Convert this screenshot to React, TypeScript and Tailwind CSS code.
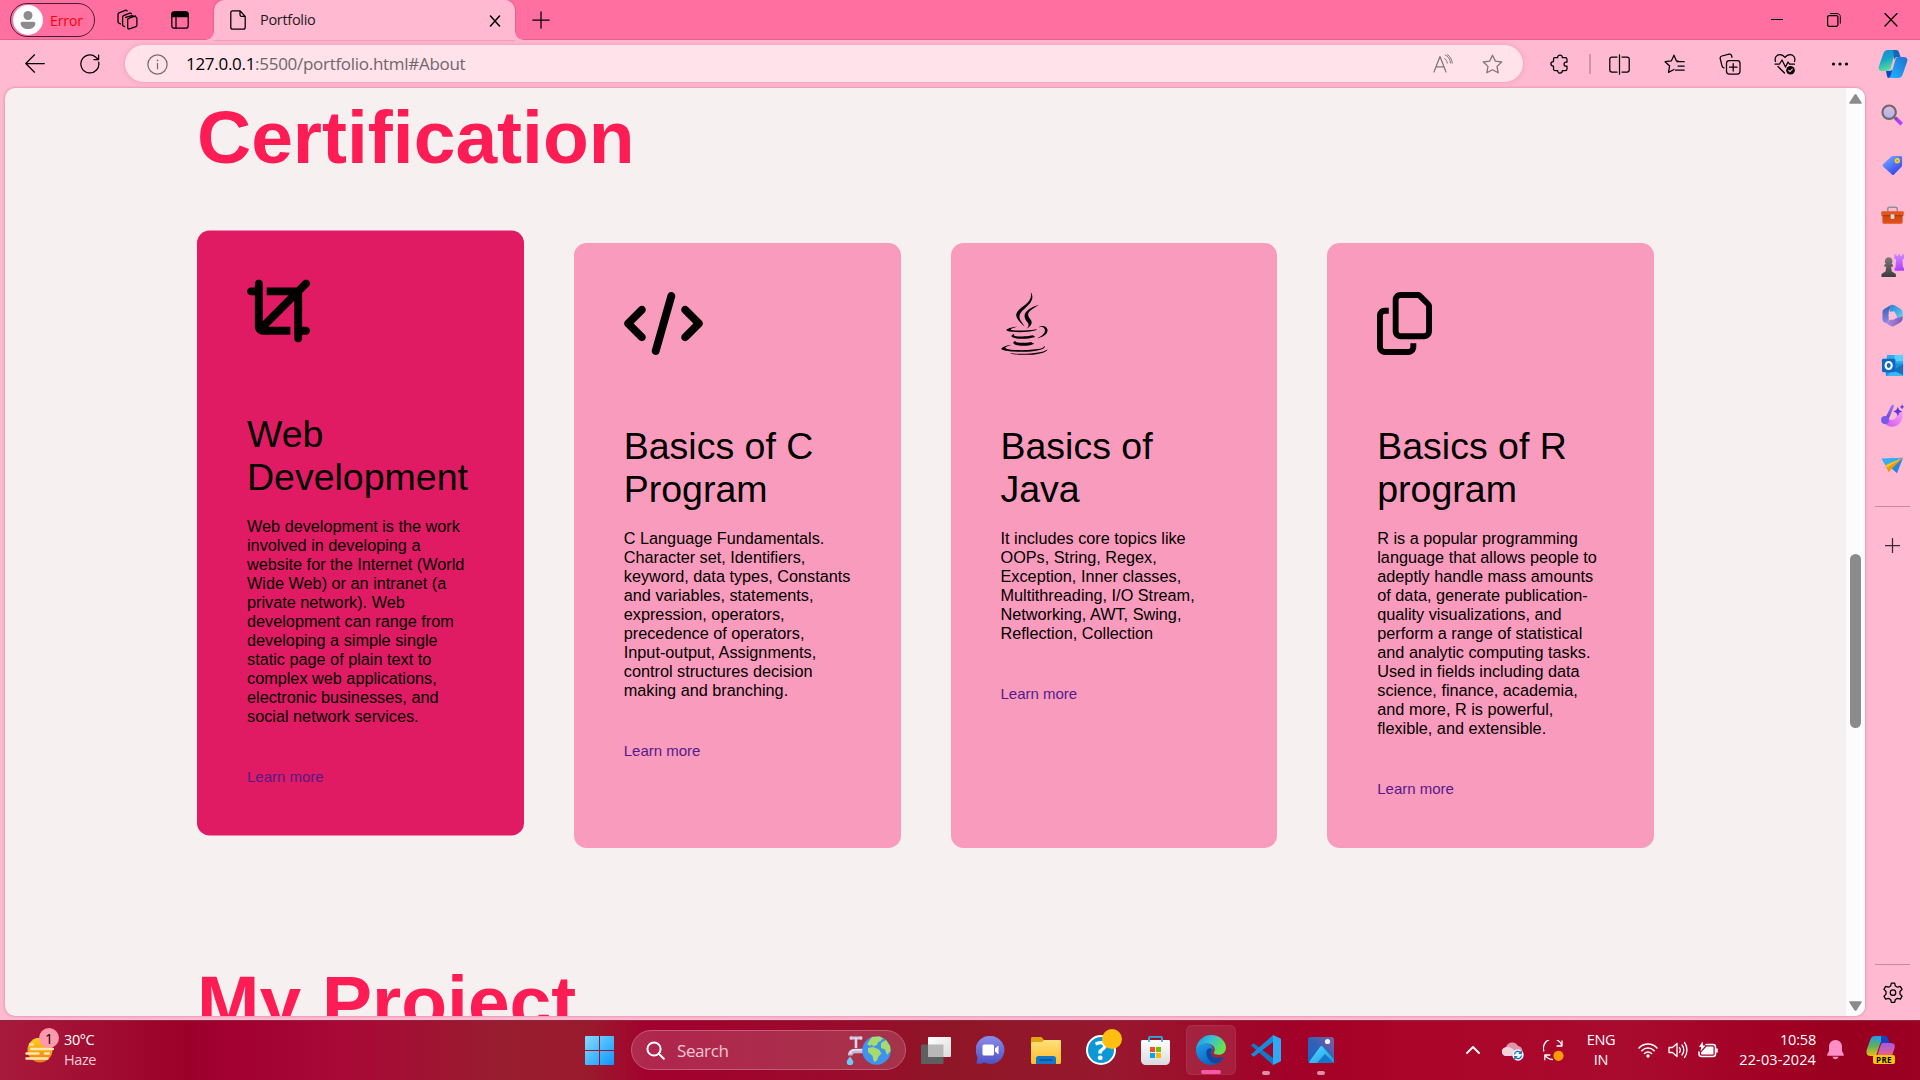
import React from "react";
import { FaCrop, FaCode, FaJava, FaRegCopy } from "react-icons/fa6";

type P = { className?: string; children?: React.ReactNode; vb?: string };

const Line = ({ className = "", children, vb = "0 0 20 20" }: P) => (
  <svg viewBox={vb} fill="none" stroke="currentColor" strokeWidth="1.25" strokeLinecap="round" strokeLinejoin="round" className={"shrink-0 block " + className}>
    {children}
  </svg>
);
const Art = ({ className = "", children, vb = "0 0 24 24" }: P) => (
  <svg viewBox={vb} className={"shrink-0 block " + className}>
    {children}
  </svg>
);

const STAR = "M10 1.2l2.7 5.6 6.1.8-4.5 4.2 1.1 6.1L10 15l-5.4 2.9 1.1-6.1L1.2 7.6l6.1-.8z";

function Gradients() {
  return (
    <svg className="absolute w-0 h-0">
      <defs>
        <linearGradient id="cpA" x1="0" y1="0" x2="0.3" y2="1">
          <stop offset="0" stopColor="#1488d8" /><stop offset=".5" stopColor="#12a5c8" /><stop offset="1" stopColor="#5fdc9a" />
        </linearGradient>
        <linearGradient id="cpB" x1="1" y1="0" x2="0" y2="1">
          <stop offset="0" stopColor="#1f6fd0" /><stop offset="1" stopColor="#1cb8ff" />
        </linearGradient>
        <linearGradient id="cpC" x1="0" y1="0" x2="0" y2="1">
          <stop offset="0" stopColor="#1f9df0" /><stop offset=".5" stopColor="#5fb05a" /><stop offset="1" stopColor="#e8c01c" />
        </linearGradient>
        <linearGradient id="cpD" x1="0" y1="0" x2="0" y2="1">
          <stop offset="0" stopColor="#a25ae8" /><stop offset="1" stopColor="#f0607c" />
        </linearGradient>
        <linearGradient id="tag" x1="0" y1="0" x2=".7" y2="1">
          <stop offset="0" stopColor="#7ab8ff" /><stop offset="1" stopColor="#3040f0" />
        </linearGradient>
        <linearGradient id="lens" x1="0" y1="0" x2="0" y2="1">
          <stop offset="0" stopColor="#e6b8dc" /><stop offset="1" stopColor="#a8b4ee" />
        </linearGradient>
        <linearGradient id="box" x1="0" y1="0" x2="0" y2="1">
          <stop offset="0" stopColor="#cf4210" /><stop offset="1" stopColor="#e0501a" />
        </linearGradient>
        <linearGradient id="rook" x1="0" y1="0" x2="0" y2="1">
          <stop offset="0" stopColor="#c98bff" /><stop offset="1" stopColor="#b23cff" />
        </linearGradient>
        <linearGradient id="pawn" x1="0" y1="0" x2="0" y2="1">
          <stop offset="0" stopColor="#7a7a7a" /><stop offset="1" stopColor="#3c3c3c" />
        </linearGradient>
        <linearGradient id="m1" x1="0" y1="1" x2="0" y2="0">
          <stop offset="0" stopColor="#8f86e0" /><stop offset="1" stopColor="#2b5fb4" />
        </linearGradient>
        <linearGradient id="m2" x1="0" y1="0" x2="1" y2="1">
          <stop offset="0" stopColor="#2f7fd8" /><stop offset="1" stopColor="#5ad4f4" />
        </linearGradient>
        <linearGradient id="m3" x1="0" y1="0" x2="1" y2="0">
          <stop offset="0" stopColor="#b593e6" /><stop offset="1" stopColor="#7b58b8" />
        </linearGradient>
        <linearGradient id="brush" x1="0" y1="0" x2="0" y2="1">
          <stop offset="0" stopColor="#9f7af4" /><stop offset="1" stopColor="#6a48d8" />
        </linearGradient>
        <linearGradient id="swirl" x1="0" y1="1" x2="1" y2="0">
          <stop offset="0" stopColor="#d84cf8" /><stop offset="1" stopColor="#f0a4f4" />
        </linearGradient>
        <linearGradient id="win" x1="0" y1="0" x2="1" y2="1">
          <stop offset="0" stopColor="#86dcff" /><stop offset="1" stopColor="#0b96ff" />
        </linearGradient>
        <linearGradient id="sun" x1="0" y1="0" x2="0" y2="1">
          <stop offset="0" stopColor="#ffd21a" /><stop offset="1" stopColor="#ee7a10" />
        </linearGradient>
        <linearGradient id="chat" x1="0" y1="0" x2="0" y2="1">
          <stop offset="0" stopColor="#8b8be8" /><stop offset="1" stopColor="#4f52c4" />
        </linearGradient>
        <linearGradient id="fold" x1="0" y1="0" x2="0" y2="1">
          <stop offset="0" stopColor="#ffe07a" /><stop offset="1" stopColor="#fcbc2c" />
        </linearGradient>
        <linearGradient id="bag" x1="0" y1="0" x2="0" y2="1">
          <stop offset="0" stopColor="#ffffff" /><stop offset="1" stopColor="#d8dade" />
        </linearGradient>
        <linearGradient id="edgeTop" x1="0" y1="0" x2="1" y2=".4">
          <stop offset="0" stopColor="#1a8fe0" /><stop offset=".5" stopColor="#35c1d8" /><stop offset="1" stopColor="#66e24a" />
        </linearGradient>
        <linearGradient id="edgeBody" x1="0" y1="0" x2=".6" y2="1">
          <stop offset="0" stopColor="#1fa0ea" /><stop offset="1" stopColor="#0b5fc0" />
        </linearGradient>
        <linearGradient id="photo" x1="0" y1="1" x2="1" y2="0">
          <stop offset="0" stopColor="#1c62c4" /><stop offset=".5" stopColor="#2f62b8" /><stop offset="1" stopColor="#8a5a9c" />
        </linearGradient>
        <linearGradient id="hill" x1="0" y1="0" x2="1" y2="1">
          <stop offset="0" stopColor="#58dcff" /><stop offset="1" stopColor="#189ae8" />
        </linearGradient>
        <linearGradient id="view" x1="0" y1="0" x2="1" y2="1">
          <stop offset="0" stopColor="#ffffff" /><stop offset="1" stopColor="#dcdcdc" />
        </linearGradient>
      </defs>
    </svg>
  );
}

function TabStrip() {
  return (
    <div className="relative flex h-10 shrink-0 items-center bg-[#ff6fa0] pl-2.5 shadow-[inset_0_-1px_0_#e2628f]">
      <div className="flex h-[34px] w-[85px] items-center rounded-full border border-[#4a2030] pl-[2px]">
        <div className="flex size-[30px] shrink-0 items-center justify-center rounded-full bg-white">
          <Art className="h-[18px] w-[16px]" vb="0 0 16 18">
            <circle cx="8" cy="4.5" r="4.500" fill="#8c8c8c" />
            <path d="M2.500 10.800H13.500C14.600 10.800 15.300 11.500 15.300 12.500C15.300 16 12 18 8 18S0.700 16 0.700 12.500C0.700 11.500 1.400 10.800 2.500 10.800Z" fill="#8c8c8c" />
          </Art>
        </div>
        <span className="ml-[7px] text-[14px] tracking-[-0.1px] text-[#ff0000]">Error</span>
      </div>
      <Line className="ml-[21px] size-[22px] text-black" vb="0 0 22 22">
        <path d="M9.500 8.300l6.500-1.600 4 1.300c.6.200.9.600.9 1.200v7c0 .7-.4 1.200-1 1.400l-6.400 2.300c-1 .3-1.800-.2-1.800-1.200v-8c0-.7.4-1.200 1-1.400l6.700-2.400" />
        <path d="M8.600 17.600l-1-.400c-.7-.3-1-.8-1-1.500V8.200c0-.8.4-1.300 1-1.500l6.200-2.500c.6-.2 1.200 0 1.700.5" />
        <path d="M4.500 14.900l-1.500-.7c-.7-.3-1-.8-1-1.500V5.400c0-.8.400-1.300 1-1.500L9.300 1.300c.7-.2 1.400 0 1.800.6" />
      </Line>
      <Line className="ml-[33px] size-[18px] text-black" vb="0 0 18 18">
        <rect x=".8" y=".8" width="16.400" height="16.400" rx="2.500" />
        <path d="M1 5.500h16V3c0-1.200-.8-2-2-2H3c-1.200 0-2 .8-2 2z" fill="currentColor" />
        <path d="M5 5.500v11.500" />
      </Line>
      <div className="relative ml-[25px] flex h-10 w-[301px] items-center rounded-t-[10px] bg-[#ffb9d0] pl-[16px] shadow-[0_0_2px_rgba(120,20,60,.5)]">
        <span className="absolute bottom-0 -left-2 size-2 bg-[radial-gradient(circle_at_0_0,#ff6fa0_7.500px,#ffb9d0_8px)]" />
        <span className="absolute bottom-0 -right-2 size-2 bg-[radial-gradient(circle_at_100%_0,#ff6fa0_7.500px,#ffb9d0_8px)]" />
        <Line className="h-[20px] w-[16px] text-black" vb="0 0 16 20">
          <path d="M2.500.8H10l5.200 5.600v10.800c0 1.200-.8 2-2 2H2.800c-1.200 0-2-.8-2-2V2.800c0-1.200.8-2 1.700-2zM10 .8v4c0 1 .6 1.600 1.600 1.600h3.600" />
        </Line>
        <span className="mb-px ml-[14px] text-[14.500px] tracking-[-0.3px] text-[#1b1b1b]">Portfolio</span>
        <Line className="mt-px ml-auto mr-[14px] size-[12px] text-black" vb="0 0 12 12"><path d="M1.500 1l9 10M10.500 1l-9 10" strokeWidth="1.500" /></Line>
      </div>
      <Line className="ml-[17px] size-[18px] text-black" vb="0 0 18 18"><path d="M9 .8v16.400M.8 9h16.400" /></Line>
      <div className="ml-auto flex items-center text-black">
        <Line className="size-[14px]" vb="0 0 14 14"><path d="M1 6.500h12" strokeLinecap="butt" strokeWidth="1" /></Line>
        <Line className="ml-[43px] size-[14px]" vb="0 0 14 14">
          <rect x=".6" y="2.500" width="10.300" height="10.800" rx="1.500" />
          <path d="M3.500.6h6.500c2 0 3.300 1.200 3.300 3.200v6.500" strokeWidth="1" />
        </Line>
        <Line className="ml-[43px] mr-[22px] size-[14px]" vb="0 0 14 14"><path d="M1 .5l12 12.500M13 .5L1 13" /></Line>
      </div>
    </div>
  );
}

function Toolbar() {
  return (
    <div className="flex h-12 shrink-0 items-center pl-[25px] text-black">
      <Line className="size-[20px]" vb="0 0 20 20"><path d="M19.300 9.500H.8M9.500.8L.8 9.500l8.700 8.700" /></Line>
      <Line className="ml-[35px] size-[20px]" vb="0 0 20 20">
        <path d="M18.700 8.200A9 9 0 1 1 15.800 3.200L18.500 5.400M18.600 1v4.600h-4.800" />
      </Line>
      <div className="mb-px ml-[25px] flex h-[37px] w-[1398px] items-center rounded-full bg-[#ffe2ea] pl-[22px] pt-px shadow-[0_0_5px_rgba(200,80,130,.3)]">
        <Line className="size-[21px] text-[#7d6a70]" vb="0 0 21 21">
          <circle cx="10.500" cy="10.500" r="9.600" /><path d="M10.500 9.500v5.300" /><path d="M10.500 6.300v.2" strokeWidth="1.700" />
        </Line>
        <span className="ml-[18px] text-[17px] tracking-[-0.290px] text-[#6f666a]"><span className="text-black">127.0.0.1</span>:5500/portfolio.html#About</span>
        <Line className="ml-auto h-[20px] w-[20px] text-[#85747a]" vb="0 0 20 20">
          <path d="M1 18L7 2.500l6 15.500M3 12.900h8" /><path d="M11.500 4.400c1.500 1 2.500 2.700 2.800 4.700M12.300 1c3 1.200 5 4.500 5.200 8M14.500.6c2.700 1.600 4.500 5 4.800 8.600" strokeWidth="1" />
        </Line>
        <Line className="ml-[29px] mr-[20px] h-[21px] w-[21px] text-[#85747a]"><path d={STAR} /></Line>
      </div>
      <Line className="ml-[27px] size-[20px]">
        <path d="M4.500 3.700H7.700c-.3-3.600 4.900-3.600 4.600 0h3c1 0 1.700.7 1.700 1.700v2.800h-1c-2.600 0-2.600 4 0 4h1v2.700c0 1-.7 1.700-1.700 1.700h-3c0 3.500-4.600 3.500-4.600 0H5.200c-1 0-1.700-.7-1.700-1.700v-2.800c-3.500 0-3.500-4.500 0-4.500V5.400c0-1 .4-1.700 1-1.700z" />
      </Line>
      <div className="ml-[19px] h-5 w-[2px] bg-[#d593a9]" />
      <Line className="ml-[18px] size-[21px]" vb="0 0 21 21">
        <path d="M10.500.8v19.400M8 3H3C1.700 3 .8 3.800.8 5v11c0 1.200.9 2 2.200 2h5M13 3h5c1.300 0 2.200.8 2.200 2v11c0 1.200-.9 2-2.200 2h-5" />
      </Line>
      <Line className="ml-[34px] size-[21px]" vb="0 0 21 21">
        <path d="M14 7L12.300 6.700 10 1.200 7.300 6.900l-6.200.8 4.500 4.300-1.100 6.400L10 15.500M13 7.700h7.200M14 12h6.200M11.500 16.200h8.700" />
      </Line>
      <Line className="ml-[34px] size-[22px]" vb="0 0 22 22">
        <rect x="7.500" y="7.500" width="13.500" height="13.500" rx="2.800" /><path d="M14.200 10.500v7.500M10.500 14.200h7.500" />
        <path d="M5 14.800C3.600 14.600 3.300 14 3 12.800L1.200 5.600C.9 4.200 1.400 3.400 2.800 3L10 1.100c1.300-.3 2.200.1 2.600 1.500l.4 1.700" />
      </Line>
      <Line className="ml-[33px] size-[22px]" vb="0 0 22 22">
        <path d="M1.500 8.500C.2 4.500 2.800 1.500 5.800 1.500c2.400 0 4 1.300 5.200 3 1.200-1.700 2.800-3 5.200-3 3 0 5.600 3 4.300 7M1 11h4.500l2.500-4 3.500 7 2.500-5 1.500 2h5M4 13.500l6.500 6.500" />
        <circle cx="16.500" cy="17.300" r="4.300" fill="currentColor" stroke="none" /><path d="M14.700 17.400l1.300 1.200 2.300-2.500" stroke="#ffb9d0" />
      </Line>
      <Art className="ml-[35px] h-[6px] w-[18px]" vb="0 0 18 6"><circle cx="2.500" cy="3" r="1.600" /><circle cx="9" cy="3" r="1.600" /><circle cx="15.500" cy="3" r="1.600" /></Art>
    </div>
  );
}

const cards = [
  {
    Icon: FaCrop, size: "h-[63px] w-[63px]", title: "Web\nDevelopment", active: true,
    text: "Web development is the work\ninvolved in developing a\nwebsite for the Internet (World\nWide Web) or an intranet (a\nprivate network). Web\ndevelopment can range from\ndeveloping a simple single\nstatic page of plain text to\ncomplex web applications,\nelectronic businesses, and\nsocial network services.",
  },
  {
    Icon: FaCode, size: "h-[63px] w-[79px]", title: "Basics of C\nProgram", active: false,
    text: "C Language Fundamentals.\nCharacter set, Identifiers,\nkeyword, data types, Constants\nand variables, statements,\nexpression, operators,\nprecedence of operators,\nInput-output, Assignments,\ncontrol structures decision\nmaking and branching.",
  },
  {
    Icon: FaJava, size: "h-[63px] w-[47px]", title: "Basics of\nJava", active: false,
    text: "It includes core topics like\nOOPs, String, Regex,\nException, Inner classes,\nMultithreading, I/O Stream,\nNetworking, AWT, Swing,\nReflection, Collection",
  },
  {
    Icon: FaRegCopy, size: "h-[63px] w-[55px]", title: "Basics of R\nprogram", active: false,
    text: "R is a popular programming\nlanguage that allows people to\nadeptly handle mass amounts\nof data, generate publication-\nquality visualizations, and\nperform a range of statistical\nand analytic computing tasks.\nUsed in fields including data\nscience, finance, academia,\nand more, R is powerful,\nflexible, and extensible.",
  },
];

function Page() {
  return (
    <div className="ml-[5px] flex h-[928px] w-[1860px] shrink-0 overflow-hidden rounded-[10px] bg-[#f6f0f0] shadow-[0_0_3px_rgba(150,40,90,.45)]">
      <main className="h-full w-[1841px] overflow-hidden pl-[192px] pt-[6px] font-['Liberation_Sans',Arial,sans-serif] text-black">
        <h1 className="h-[86px] text-[75px] leading-[86px] font-bold text-[#fd1c54] [font-variant-ligatures:none]">Certification</h1>
        <div className="mt-[63px] grid w-[1457px] grid-cols-4 gap-[50px]">
          {cards.map((c) => (
            <article key={c.title} className={"h-[605px] rounded-[12.500px] p-[50px] pt-[49px] " + (c.active ? "-translate-y-[12.500px] bg-[#e11b63]" : "bg-[#f99bbc]")}>
              <c.Icon className={"block " + c.size} />
              <h2 className="mt-[70px] whitespace-pre text-[37.500px] leading-[43px]">{c.title}</h2>
              <p className="mt-[18px] whitespace-pre text-[16.250px] leading-[19px]">{c.text}</p>
              <a className="mt-[42px] block text-[15px] leading-[17px] text-[#551a8b]">Learn more</a>
            </article>
          ))}
        </div>
        <h1 className="mt-[111px] h-[86px] text-[75px] leading-[86px] font-bold text-[#fd1c54]">My Project</h1>
      </main>
      <div className="flex w-[19px] flex-col items-center bg-[#fcfcfc] text-[#8b8b8b]">
        <Art className="mt-[6px] h-[10px] w-[13px]" vb="0 0 13 10"><path d="M5.600.6c.5-.6 1.300-.6 1.800 0l5.200 7.800c.4.700 0 1.400-.8 1.400H1.200c-.8 0-1.200-.7-.8-1.400z" fill="#8b8b8b" /></Art>
        <div className="mt-[450px] h-[174px] w-[11px] rounded-full bg-[#8b8b8b]" />
        <Art className="mt-auto mb-[5px] h-[10px] w-[13px]" vb="0 0 13 10"><path d="M5.600 9.400c.5.600 1.300.6 1.800 0l5.200-7.800c.4-.7 0-1.400-.8-1.400H1.200C.4.200 0 .9.400 1.600z" fill="#8b8b8b" /></Art>
      </div>
    </div>
  );
}

const sideIcons = [
  <>
    <path d="M15 14.500l6.500 6.500" stroke="#b43cff" strokeWidth="3.800" strokeLinecap="butt" /><path d="M13.500 13.500l3 3" stroke="#6c5c74" strokeWidth="2" />
    <circle cx="8.500" cy="8.500" r="7" fill="url(#lens)" stroke="#6a6a6a" strokeWidth="2.200" />
  </>,
  <>
    <path d="M12.500 2h8c1 0 1.500.6 1.500 1.500v8.200c0 .8-.3 1.300-.8 1.800l-7.600 8c-.7.700-1.500.7-2.200 0L2.200 13c-.7-.7-.7-1.500 0-2.200l8.300-8c.6-.6 1.200-.8 2-.8z" fill="url(#tag)" />
    <circle cx="17" cy="7" r="1.900" fill="#8c90a0" stroke="#ffd21c" strokeWidth="1.700" />
  </>,
  <>
    <path d="M7 8V5.500C7 4 8 3.500 9 3.500h6c1 0 2 .5 2 2V8" fill="none" stroke="#909090" strokeWidth="1.600" />
    <rect x="1.500" y="11" width="21" height="9.500" rx="1.200" fill="url(#box)" /><rect x=".3" y="7.500" width="23.400" height="5" rx="1" fill="#e0561c" /><path d="M1.500 12.200h21" stroke="#a83408" />
    <rect x="10" y="10.700" width="4" height="5" rx="1.300" fill="#d6d6d6" />
  </>,
  <>
    <path d="M14 .3h2.200v1.800h1.700V.3h2.200v1.800h1.700V.3H24v4.500l-1.600 1.200.5 7.500 1.100 1.200v2.800h-9.800v-2.800l1-1.200.5-7.500L14 4.800z" fill="url(#rook)" />
    <path d="M8 3.500a4 4 0 0 1 3 6.600l1.500 1.200v2h-2l.8 5 4.200 2.500V24H.5v-3.200l4.200-2.500.8-5h-2v-2L5 10.100a4 4 0 0 1 3-6.600z" fill="url(#pawn)" />
  </>,
  <>
    <path d="M10.500 1L3.800 4.900C2.300 5.800 1.500 7 1.500 8.700v7c0 1.700.8 2.900 2.300 3.700 2.200 1 4.200-.4 4.200-2.400V8z" fill="url(#m1)" />
    <path d="M9.800 1.400c1.500-.9 2.900-.9 4.400 0l6 3.600c1.500.9 2.300 2 2.300 3.700v4.300c-.2 2-3.500 2.500-5.500 1.200L14 9 9 8z" fill="url(#m2)" />
    <path d="M22.500 12v3.500c0 1.600-.8 2.800-2.300 3.700l-6 3.500c-1.500.9-2.900.9-4.400 0l-6-3.500c2 .8 4.200-.5 4.200-2.200L13 16l5-2c2 .5 4-.5 4.500-2z" fill="url(#m3)" />
    <path d="M10 7.800h4L16.300 12 14 16.200h-4L7.700 12z" fill="#ffc0d6" />
  </>,
  <>
    <rect x="6" y="1" width="17" height="12" rx="1" fill="#2eaaf0" /><path d="M14 1h9v6.500h-9z" fill="#56d0ff" />
    <path d="M5 10h18v12c0 .6-.4 1-1 1H6c-.6 0-1-.4-1-1z" fill="#1a8fe0" /><path d="M23 11L12 17l11 5.500z" fill="#1470c0" /><path d="M12 17l11 5c0 .6-.4 1-1 1H6z" fill="#36b8f4" />
    <rect x="1" y="5" width="14" height="14" rx="1.500" fill="#0c68c4" /><ellipse cx="8" cy="12" rx="3.200" ry="3.600" fill="none" stroke="#fff" strokeWidth="2.200" />
  </>,
  <>
    <path d="M7.500 15c2 2.500 6.500 2 8.500-1.500 1.200-2 1-3.500 1.500-5.500L22 8.500c1.500 5-.2 10.500-4.500 13.500-5 3.300-12 2-15-4z" fill="url(#swirl)" />
    <path d="M12.500.8c1 .4 1.200 1.100.9 2L8.300 15 5 13.500 10.800 1.600c.4-.7 1-.9 1.700-.8z" fill="url(#brush)" /><circle cx="4.300" cy="16.800" r="4.200" fill="#7858e8" />
    <path d="M17.500 3l1.500 3.200L22.200 7.700 19 9.200l-1.500 3.200L16 9.200l-3.200-1.500L16 6.200z" fill="#5c34e4" /><path d="M22 .3l.8 1.900 1.700.8-1.700.8-.8 1.900-.8-1.900-1.700-.8 1.700-.8z" fill="#7038e8" />
  </>,
  <>
    <path d="M.5 5l22.500-1L11 13z" fill="#38b0f0" /><path d="M23 4l-6.300 16-6.700-6z" fill="#2486e4" />
    <path d="M23 4L5 12.500 8 19l3.500-4z" fill="#e89a10" /><path d="M.5 5L5 12.500 23 4z" fill="#34aef0" /><path d="M23 4L5 11.500l.5 3z" fill="#ffc21c" />
  </>,
];

function Sidebar() {
  return (
    <aside className="flex w-[55px] flex-col items-center">
      <div className="flex h-[50px] items-center">
        <Art className="mb-[2px] h-[28px] w-[30px]" vb="0 0 30 28">
          <path d="M17 0h-7C7 0 5.800 1.800 5 4.500L1 16c-1.200 3.800.5 5 3.500 5H9c2.500 0 3.300-1.500 4-4l2.700-9.500C16.400 5 17.500 4 20 4c-.5-2.500-1-4-3-4z" fill="url(#cpA)" />
          <path d="M13 28h7c3 0 4.200-1.800 5-4.500L29 12c1.200-3.800-.5-5-3.500-5H21c-2.500 0-3.300 1.500-4 4l-2.700 9.500C13.600 23 12.500 24 10 24c.5 2.500 1 4 3 4z" fill="url(#cpB)" />
          <path d="M15 0h3c2 0 2.700 1 3.300 3l1.200 4H20c-2.500 0-3 1-3.700 3z" fill="#1565b8" /><path d="M8 21h3.500c1.800 0 2.500-.8 3.200-3L13 24.500c-.8 2.500-1.500 3.500-3 3.500C9 27 8.500 24 8 21z" fill="#1246c0" />
        </Art>
      </div>
      {sideIcons.map((icon, i) => (
        <div key={i} className="flex h-[50px] items-center"><Art className="size-[23px]">{icon}</Art></div>
      ))}
      <div className="mt-4 h-px w-[35px] shrink-0 bg-[#c48a9d]" />
      <Line className="mt-[31px] size-[15px] text-[#3a2a30]" vb="0 0 15 15"><path d="M7.500.5v14M.5 7.500h14" /></Line>
      <div className="mt-auto h-px w-[35px] shrink-0 bg-[#c48a9d]" />
      <Line className="mt-[17px] mb-[16px] size-[22px] text-black" vb="0 0 24 24">
        <g strokeWidth="1.400">
          <path d="M10.200 1.200h3.600l.8 3.200 2.300 1.300 3.100-.9 1.900 3.200-2.300 2.300v2.900l2.300 2.300-1.900 3.200-3.100-.9-2.300 1.300-.8 3.200h-3.600l-.8-3.200-2.300-1.300-3.100.9-1.900-3.200 2.300-2.300v-2.900L2.100 8 4 4.800l3.100.9 2.300-1.300z" /><circle cx="12" cy="11.700" r="3" />
        </g>
      </Line>
    </aside>
  );
}

function Taskbar() {
  return (
    <footer className="relative flex h-[60px] shrink-0 items-center bg-[linear-gradient(90deg,#a81a3c_0px,#9b0029_190px,#a10031_225px,#a80936_350px,#981d2e_500px,#9a1a2d_590px,#a3002e_650px,#9a0c2c_850px,#8e1626_950px,#98182e_1110px,#a20028_1300px,#ab0528_1400px,#a80a2e_1640px,#a10024_1780px,#98001f_1850px,#9c0024_1920px)] text-white shadow-[inset_0_1px_0_#8a2740]">
      <div className="relative ml-[25px] h-[40px] w-[39px]">
        <Art className="absolute top-[8px] left-0 h-[25px] w-[29px]" vb="0 0 29 25">
          <circle cx="15" cy="12" r="12.500" fill="url(#sun)" />
          <path d="M5 6.500h3M6 11h22M1.500 15.500h12M20 15.500h4M1.500 20.500h21" stroke="#ffe9b0" strokeWidth="2.400" strokeLinecap="round" />
        </Art>
        <span className="absolute -top-[2px] left-[14px] flex size-5 items-center justify-center rounded-full bg-[#ff98ac] text-[14px] text-black">1</span>
      </div>
      <div className="w-[200px] text-[14.500px] leading-5 tracking-[-0.4px]"><div>30°C</div><div className="text-[#f0cdd5]">Haze</div></div>
      <Art className="ml-[321px] size-[29px]" vb="0 0 29 29">
        <path d="M1 0h13v14H0V1a1 1 0 0 1 1-1zM15 0h13a1 1 0 0 1 1 1v13H15zM0 15h14v14H1a1 1 0 0 1-1-1zM15 15h14v13a1 1 0 0 1-1 1H15z" fill="url(#win)" />
      </Art>
      <div className="ml-[17px] flex h-10 w-[275px] items-center rounded-full border border-[#c25a78] bg-[#ffffff26] pl-[14px]">
        <Line className="size-[19px]" vb="0 0 19 19"><g strokeWidth="2"><circle cx="8" cy="8" r="6.600" /><path d="M12.800 12.800l5 5" /></g></Line>
        <span className="mt-px ml-[12px] text-[17px] tracking-[-0.4px] text-[#efc7d2]">Search</span>
        <Art className="ml-auto h-[30px] w-[18px]" vb="0 0 18 30">
          <path d="M5.500 3h9" stroke="#cfc4dc" strokeWidth="3" strokeLinecap="round" /><path d="M5 1.500v3M15 1.500v3M10 2v11" stroke="#ded6e8" strokeWidth="2.600" /><path d="M18 16H9c-3.500 0-4.800 1.500-4.800 4.500" stroke="#c4b8d4" strokeWidth="4.600" fill="none" /><path d="M18 14.800H9c-3 0-4.500 1-5 4" stroke="#ece6f2" strokeWidth="1.400" fill="none" />
          <path d="M4 21.500c2 2.500 3.300 4 3.300 5.500a3.300 3.300 0 0 1-6.600 0c0-1.500 1.300-3 3.300-5.500z" fill="#6cc8f4" />
        </Art>
        <Art className="mr-[14px] -ml-[2px] size-[29px]" vb="0 0 29 29">
          <circle cx="14.500" cy="14.500" r="14.300" fill="#3f92ee" />
          <path d="M10 1l8-.6 3 2-3 3-2 .5-1 3-4 1.500-1-2-2 1.500L5 8zM6 12l5-1 6 2.500 2.500 4-3 3-1.500 4-3 1.500-1.500-6L6 16zM19 7l5-3 4 6 .6 5-3.600 4-2-5.500-4-1.500z" fill="#a5dc6c" />
        </Art>
      </div>
      <Art className="ml-[15px] h-[27px] w-[30px]" vb="0 0 30 27">
        <rect x="0" y="7.500" width="22.500" height="19.500" rx="1" fill="#5f5f5f" /><rect x="7" y="0" width="23" height="20" rx="1" fill="url(#view)" /><path d="M7 7.500h15.500V20H7z" fill="#b8b8b8" />
      </Art>
      <Art className="ml-[25px] size-[29px]" vb="0 0 29 29">
        <path d="M14.500 0a14 14 0 1 1-6.400 26.500C6 27.800 3 28.200.5 27.500l1-6.500A14 14 0 0 1 14.500 0z" fill="url(#chat)" />
        <rect x="6.500" y="8.500" width="11.500" height="11" rx="1.500" fill="#fff" /><path d="M19 12.500l3.500-3v9l-3.500-3z" fill="#fff" />
      </Art>
      <Art className="ml-[26px] h-[27px] w-[30px]" vb="0 0 30 27">
        <path d="M0 1.500C0 .6.600 0 1.500 0h9l2.500 3h15.500c.9 0 1.500.6 1.500 1.500V9H0z" fill="#e0a410" /><path d="M0 6.500C0 5.600.5 5 1.500 5H11l2-2h15.500c.9 0 1.500.6 1.500 1.500v21c0 .9-.6 1.500-1.500 1.500h-27C.6 27 0 26.400 0 25.500z" fill="url(#fold)" />
        <path d="M5 27v-5.500C5 20 6 19 7.500 19h15c1.500 0 2.500 1 2.500 2.500V27z" fill="#1478c8" /><path d="M8.500 23h13" stroke="#0a4c8c" strokeWidth="1.300" />
      </Art>
      <div className="relative ml-[25px] flex size-[30px] items-center justify-center rounded-full border-2 border-white bg-[#0c98d4] text-[26px] leading-none font-bold">
        ?
        <span className="absolute -top-[8px] -right-[8px] size-5 rounded-full bg-[#ffbf10]" />
      </div>
      <Art className="ml-[25px] size-[29px]" vb="0 0 29 29">
        <path d="M8 6V2c0-.7.400-1.200 1.200-1.200h10.600c.8 0 1.200.5 1.200 1.200v4" fill="none" stroke="#22aee8" strokeWidth="1.800" />
        <path d="M0 5.500C0 4.600.5 4 1.500 4h26c1 0 1.500.6 1.500 1.500V24c0 3-2 5-5 5H5c-3 0-5-2-5-5z" fill="url(#bag)" /><path d="M8 6V2M21 6V2" stroke="#22aee8" strokeWidth="1.600" />
        <path d="M9 11h5v5H9z" fill="#f25022" /><path d="M15 11h5v5h-5z" fill="#7fba00" /><path d="M9 17h5v5H9z" fill="#00a4ef" /><path d="M15 17h5v5h-5z" fill="#ffb900" />
      </Art>
      <div className="relative ml-[16px] flex size-[50px] items-center justify-center rounded-[6px] border border-[#ffffff10] bg-[#ffffff17]">
        <Art className="size-[30px]" vb="0 0 30 30">
          <path d="M27.500 22.500C25 27.200 20.300 30 15 30 6.700 30 0 23.300 0 15 0 9 6 7.500 11 8.500c5 1 6.500 4 6 6.500-1 1-1.800 2-1.800 3.200 0 3.500 5 5.500 9.300 4.600 1.500-.3 2.300-.8 3-.3z" fill="url(#edgeBody)" />
          <path d="M10.500 16c-1 6 3.500 13 10.500 12.500 3-1.300 5-3.300 6.500-6 .2-.6-.3-.8-1-.4-4 2-11 .7-11.500-3.600-.2-1.500.8-2.700 1.700-3.500-1.200-2.700-5.200-2.500-6.200 1z" fill="#10489c" />
          <path d="M0 14.500C.5 6.200 7 0 15 0c9 0 15 6.500 15 12.500 0 4.500-3.300 7.300-7.300 7.300-3 0-5-1-5-2 0-.7 1-1 1-3.300 0-3.500-3.700-6-8.200-6C6 8.500 1.500 10.500 0 14.500z" fill="url(#edgeTop)" />
        </Art>
        <span className="absolute bottom-0 left-[14px] h-1 w-5 rounded-full bg-[#ff55a6]" />
      </div>
      <div className="relative ml-[15px] flex h-[50px] w-[30px] items-center">
        <Art className="size-[30px]" vb="0 0 30 30">
          <path d="M0 10.500l2-1.800c.6-.4 1-.4 1.500 0L22 23v7z" fill="#1478c4" /><path d="M0 19.500l2 1.800c.6.400 1 .4 1.500 0L22 7V0z" fill="#1b8ad8" /><path d="M22 0l7 3.300c.6.300 1 .7 1 1.500v20.400c0 .8-.4 1.200-1 1.500L22 30z" fill="#30a8f4" />
        </Art>
        <span className="absolute bottom-0 left-[11px] h-1 w-2 rounded-full bg-[#dc8fa4]" />
      </div>
      <div className="relative ml-[27px] flex h-[50px] w-[26px] items-center">
        <Art className="size-[26px]" vb="0 0 26 26">
          <rect width="26" height="26" rx="2.500" fill="url(#photo)" /><path d="M1 25l11-15c1-1.300 2-1.300 3 0l11 12.500V24c0 1.200-.8 2-2 2H2z" fill="url(#hill)" /><path d="M9 26l8-9 9 9z" fill="#1478c8" /><circle cx="19.500" cy="4.500" r="2.600" fill="#f0f4ff" />
        </Art>
        <span className="absolute bottom-0 left-[9px] h-1 w-2 rounded-full bg-[#dc8fa4]" />
      </div>
      <div className="ml-auto flex items-center">
        <Line className="h-[10px] w-[14px]" vb="0 0 14 10"><path d="M1 8l6-6 6 6" strokeWidth="1.900" /></Line>
        <Art className="mt-[3px] ml-[22px] h-[19px] w-[22px]" vb="0 0 22 19">
          <path d="M4.500 14A4.300 4.300 0 0 1 4 5.200 6.500 6.500 0 0 1 16 4 5 5 0 0 1 17.500 13.500L15 14z" fill="#dc98aa" /><path d="M4.500 14A4.400 4.400 0 0 1 4 5.200c3-.7 6 .8 9 3.800L9 14z" fill="#f2d4dc" />
          <circle cx="16" cy="13" r="5.700" fill="#f0f8ff" /><path d="M12.500 12.500a3.500 3.500 0 0 1 6.300-1.700M19.500 13.500a3.500 3.500 0 0 1-6.300 1.700M19.200 8.800v2.500h-2.500M12.800 17.200v-2.500h2.500" stroke="#1470c8" strokeWidth="1.300" fill="none" />
        </Art>
        <Line className="ml-[19px] size-[21px]" vb="0 0 21 21">
          <path d="M.8 11A9.200 9.200 0 0 1 18.800 5.500M19 1v5h-5M9.500 19.500A9.500 9.500 0 0 1 2 15.200M1.800 19.800v-4.800h5" strokeWidth="1.300" /><circle cx="15.500" cy="15.800" r="5.100" fill="#ff9a05" stroke="none" />
        </Line>
        <div className="ml-[20px] w-[34px] text-center text-[14.500px] leading-5 tracking-[-0.3px]"><div>ENG</div><div>IN</div></div>
        <Line className="ml-[20px] h-[16px] w-[20px]" vb="0 0 20 16">
          <path d="M1 6c5-5.300 13-5.300 18 0M3.800 8.800c3.500-3.600 8.900-3.600 12.400 0M6.500 11.500c2-2 5-2 7 0" strokeWidth="1.500" /><circle cx="10" cy="14" r="1.700" fill="currentColor" stroke="none" />
        </Line>
        <Line className="ml-[10px] h-[18px] w-[20px]" vb="0 0 20 18">
          <path d="M1 6.500v5h3.500L9 15.500v-13L4.500 6.500zM11.500 6.500c1 1.500 1 3.500 0 5M14 4c2.200 3 2.200 7 0 10M16.500 1.500c3.300 4.500 3.300 10.500 0 15" strokeWidth="1.300" />
        </Line>
        <Line className="ml-[10px] h-[18px] w-[20px]" vb="0 0 20 18">
          <path d="M8 3.500h7c1.500 0 2.500 1 2.500 2.500v7c0 1.500-1 2.500-2.500 2.500H3.500c-1.500 0-2.500-1-2.500-2.500V11M19 8v3" strokeWidth="1.500" />
          <path d="M8.500 5.500h6c.6 0 1 .4 1 1v6c0 .6-.4 1-1 1H4c-.6 0-1-.4-1-1v-1z" fill="currentColor" stroke="none" /><path d="M4.500.5L1 6h2.200l-.7 4.500L7.500 4.500H5z" fill="currentColor" stroke="none" />
        </Line>
        <div className="ml-[7px] w-[91px] text-right text-[14.500px] leading-5 tracking-[0.100px]"><div className="tracking-[-0.200px]">10:58</div><div>22-03-2024</div></div>
        <Art className="ml-[11px] h-[20px] w-[17px]" vb="0 0 17 20">
          <path d="M8.500 0c4 0 6.500 3 6.500 6.500V11l1.800 3.500c.3.700 0 1.200-.7 1.200H.9c-.7 0-1-.5-.7-1.200L2 11V6.500C2 3 4.500 0 8.500 0zM5.500 16.700h6c-.3 1.600-1.500 2.500-3 2.500s-2.700-.9-3-2.500z" fill="#ff8fc4" />
        </Art>
        <div className="relative mr-[24px] ml-[22px] h-[28px] w-[30px]">
          <Art className="h-[22px] w-[29px]" vb="0 0 29 22">
            <path d="M17 0h-8C6 0 5 1.800 4 4.500L1 13c-1.500 4.500 0 7 3.500 7H10l4-12c.8-2.500 2-3.500 5-3.500z" fill="url(#cpC)" /><path d="M15 0h4c2 0 2.700 1 3.300 3l1.200 4H19c-2 0-3 1-4 3z" fill="#1840c0" />
            <path d="M17.500 7h7c3.500 0 5 1.500 4 5l-2.500 8H11l3-9c.8-2.500 1.500-4 3.500-4z" fill="url(#cpD)" />
          </Art>
          <span className="absolute bottom-0 left-[7px] flex h-[9px] w-[22px] items-center justify-center rounded-[2px] bg-[#ffc60a] text-[8px] leading-none font-bold tracking-[0.4px] text-black">PRE</span>
        </div>
      </div>
    </footer>
  );
}

export default function App() {
  return (
    <div className="flex h-[1080px] w-[1920px] flex-col overflow-hidden bg-[#ffb9d0] font-['Open_Sans','Noto_Sans',sans-serif]">
      <Gradients />
      <TabStrip />
      <div className="flex h-[980px] shrink-0">
        <div className="flex w-[1865px] flex-col">
          <Toolbar />
          <Page />
        </div>
        <Sidebar />
      </div>
      <Taskbar />
    </div>
  );
}
